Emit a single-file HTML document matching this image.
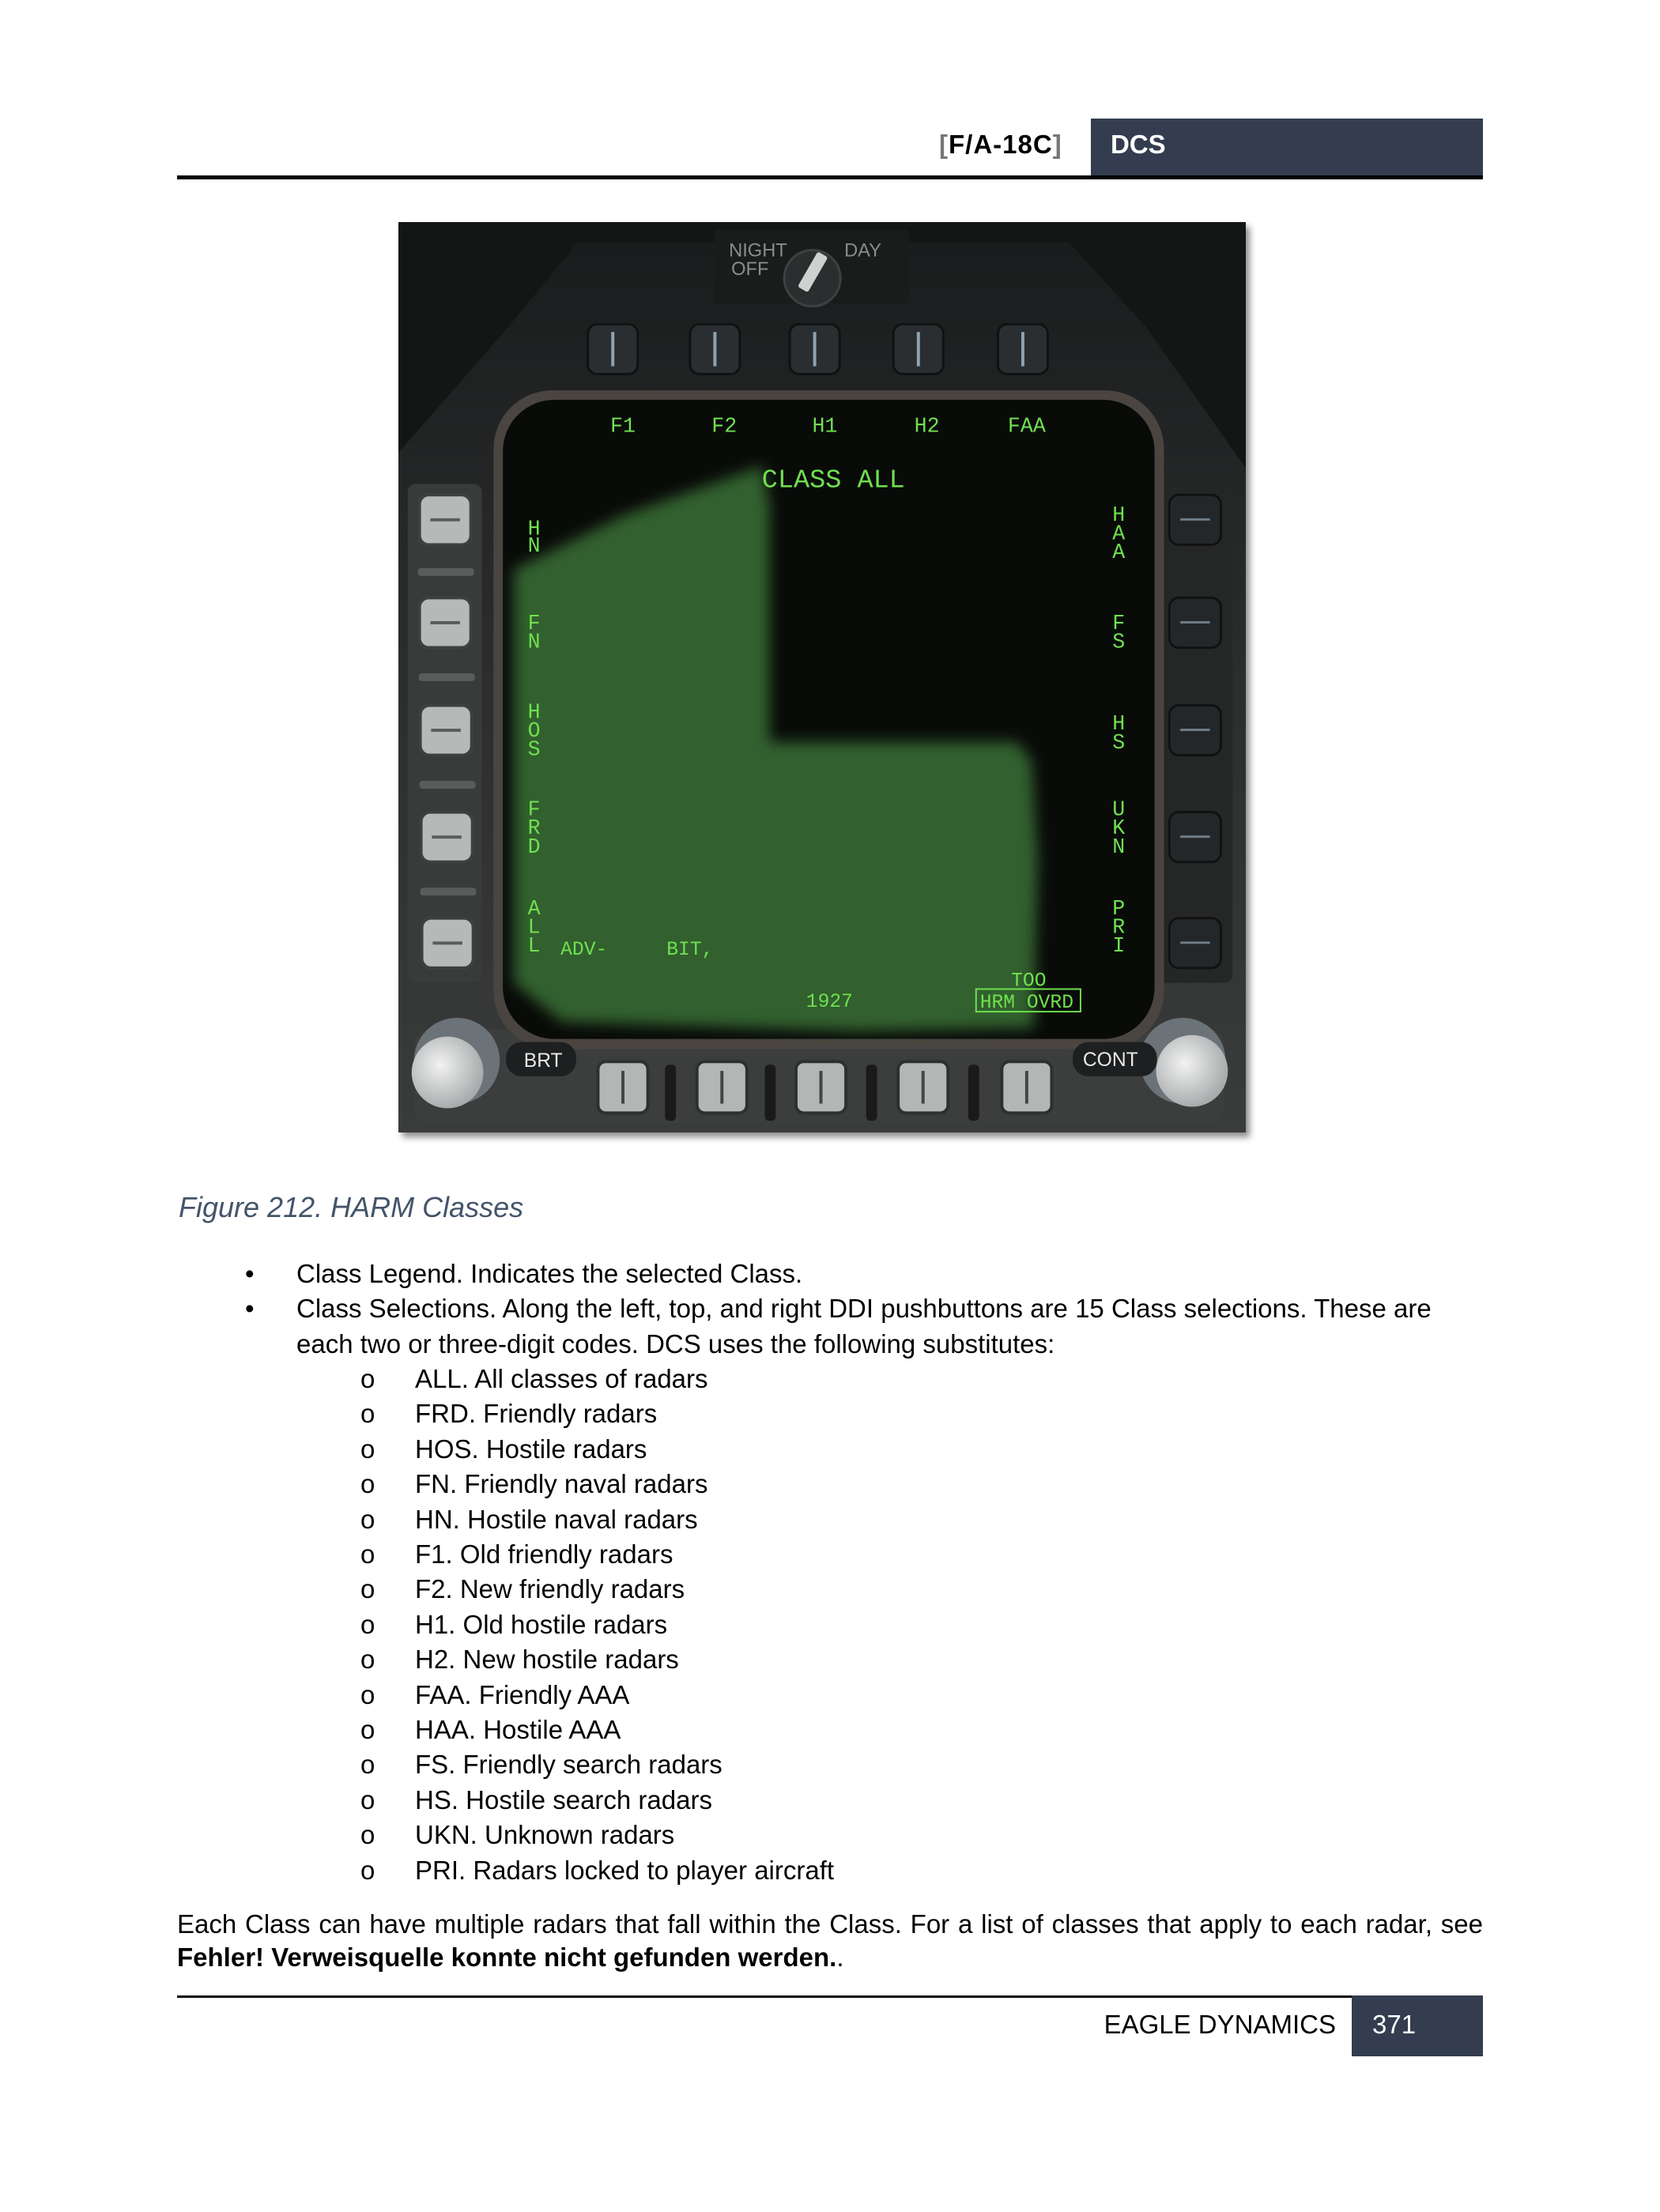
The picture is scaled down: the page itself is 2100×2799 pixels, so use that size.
<!DOCTYPE html>
<html><head><meta charset="utf-8"><style>
body{margin:0;background:#fff;}
#p{position:relative;width:2100px;height:2799px;overflow:hidden;background:#fff;font-family:"Liberation Sans",sans-serif;color:#000;}
.a{position:absolute;white-space:nowrap;}
.t{font-size:33px;line-height:44.4px;}
</style></head><body><div id="p">
<div class="a" style="left:1380px;top:150px;width:496px;height:72px;background:#333d4f;"></div>
<div class="a" style="left:224px;top:222px;width:1652px;height:5px;background:#000;"></div>
<div class="a" style="left:1188px;top:164px;font-size:33px;font-weight:bold;letter-spacing:1px;"><span style="color:#777">[</span>F/A-18C<span style="color:#777">]</span></div>
<div class="a" style="left:1405px;top:164px;font-size:33px;font-weight:bold;color:#fff;">DCS</div>

<div class="a" style="left:504px;top:281px;width:1072px;height:1152px;box-shadow:5px 6px 8px rgba(0,0,0,0.45);">
<svg width="1072" height="1152" viewBox="510 284 1087 1168" preserveAspectRatio="none" style="display:block">
<defs>
<filter id="bl"><feGaussianBlur stdDeviation="9"/></filter>
<linearGradient id="bz" x1="0" y1="0" x2="0" y2="1"><stop offset="0" stop-color="#1a1c1d"/><stop offset="0.5" stop-color="#2c2e2e"/><stop offset="1" stop-color="#3a3c3c"/></linearGradient>
<radialGradient id="kn" cx="0.4" cy="0.4" r="0.6"><stop offset="0" stop-color="#f2f2f2"/><stop offset="1" stop-color="#a9acad"/></radialGradient>
</defs>
<rect x="510" y="284" width="1087" height="1168" fill="#141616"/>
<polygon points="510,580 650,420 740,310 1370,310 1470,420 1597,600 1597,1452 510,1452" fill="url(#bz)"/>
<rect x="522" y="620" width="95" height="640" rx="10" fill="#393b3a"/>
<rect x="1485" y="620" width="95" height="640" rx="10" fill="#252727"/>
<rect x="530" y="1320" width="1040" height="120" rx="20" fill="#3c3e3e"/>
<rect x="632" y="500" width="860" height="845" rx="75" fill="#4a4540"/>
<rect x="644" y="512" width="836" height="820" rx="66" fill="#090b09"/>
<polygon filter="url(#bl)" points="658,730 800,660 977,597 986,650 986,951 1303,951 1322,975 1330,1100 1325,1318 1100,1322 720,1310 658,1260" fill="#33602d"/>
<rect x="915" y="294" width="250" height="95" rx="6" fill="#1a1c1c"/>
<text x="934" y="328" font-family="Liberation Sans" font-size="24" fill="#8a8d8d">NIGHT</text>
<text x="1082" y="328" font-family="Liberation Sans" font-size="24" fill="#8a8d8d">DAY</text>
<text x="937" y="352" font-family="Liberation Sans" font-size="24" fill="#8a8d8d">OFF</text>
<circle cx="1041" cy="356" r="36" fill="#2b2d2e" stroke="#3e4142" stroke-width="3"/>
<rect x="1033" y="322" width="15" height="52" rx="3" fill="#cfd1d1" transform="rotate(30 1041 350)"/>
<g fill="#2a2e31" stroke="#111" stroke-width="3">
<rect x="753" y="415" width="64" height="64" rx="12"/><rect x="884" y="415" width="64" height="64" rx="12"/><rect x="1012" y="415" width="64" height="64" rx="12"/><rect x="1145" y="415" width="64" height="64" rx="12"/><rect x="1279" y="415" width="64" height="64" rx="12"/>
</g>
<g fill="#8ea3b0"><rect x="783" y="425" width="4" height="44"/><rect x="914" y="425" width="4" height="44"/><rect x="1042" y="425" width="4" height="44"/><rect x="1175" y="425" width="4" height="44"/><rect x="1309" y="425" width="4" height="44"/></g>
<g fill="#b6b9b8" stroke="#3d4040" stroke-width="4">
<rect x="537" y="634" width="66" height="64" rx="12"/><rect x="537" y="766" width="66" height="64" rx="12"/><rect x="538" y="904" width="66" height="64" rx="12"/><rect x="539" y="1041" width="66" height="64" rx="12"/><rect x="540" y="1177" width="66" height="64" rx="12"/>
</g>
<g fill="#5a5c5c"><rect x="551" y="664" width="38" height="4"/><rect x="551" y="796" width="38" height="4"/><rect x="552" y="934" width="38" height="4"/><rect x="553" y="1071" width="38" height="4"/><rect x="554" y="1207" width="38" height="4"/>
<rect x="535" y="728" width="72" height="10" rx="4"/><rect x="536" y="863" width="72" height="10" rx="4"/><rect x="537" y="1001" width="72" height="10" rx="4"/><rect x="538" y="1138" width="72" height="10" rx="4"/></g>
<g fill="#24272a" stroke="#111" stroke-width="3">
<rect x="1499" y="634" width="66" height="64" rx="12"/><rect x="1499" y="766" width="66" height="64" rx="12"/><rect x="1499" y="904" width="66" height="64" rx="12"/><rect x="1499" y="1041" width="66" height="64" rx="12"/><rect x="1499" y="1177" width="66" height="64" rx="12"/>
</g>
<g fill="#6f7d86"><rect x="1513" y="664" width="38" height="3"/><rect x="1513" y="796" width="38" height="3"/><rect x="1513" y="934" width="38" height="3"/><rect x="1513" y="1071" width="38" height="3"/><rect x="1513" y="1207" width="38" height="3"/></g>
<g fill="#b3b6b5" stroke="#2e3030" stroke-width="4">
<rect x="766" y="1361" width="64" height="66" rx="10"/><rect x="893" y="1361" width="64" height="66" rx="10"/><rect x="1020" y="1361" width="64" height="66" rx="10"/><rect x="1151" y="1361" width="64" height="66" rx="10"/><rect x="1284" y="1361" width="64" height="66" rx="10"/>
</g>
<g fill="#444"><rect x="796" y="1373" width="4" height="42"/><rect x="923" y="1373" width="4" height="42"/><rect x="1050" y="1373" width="4" height="42"/><rect x="1181" y="1373" width="4" height="42"/><rect x="1314" y="1373" width="4" height="42"/></g>
<g fill="#1a1a1a"><rect x="852" y="1365" width="14" height="72" rx="5"/><rect x="980" y="1365" width="14" height="72" rx="5"/><rect x="1110" y="1365" width="14" height="72" rx="5"/><rect x="1241" y="1365" width="14" height="72" rx="5"/></g>
<circle cx="585" cy="1360" r="55" fill="#6c7378"/><circle cx="573" cy="1375" r="46" fill="url(#kn)"/>
<circle cx="1516" cy="1360" r="55" fill="#6c7378"/><circle cx="1528" cy="1373" r="46" fill="url(#kn)"/>
<rect x="648" y="1336" width="90" height="44" rx="20" fill="#1d1f20"/>
<rect x="1375" y="1336" width="108" height="44" rx="20" fill="#1d1f20"/>
<text x="671" y="1368" font-family="Liberation Sans" font-size="25" fill="#e8e8e8">BRT</text>
<text x="1388" y="1367" font-family="Liberation Sans" font-size="25" fill="#e8e8e8">CONT</text>
<g font-family="Liberation Mono" font-size="27" fill="#6fe050" text-anchor="middle">
<text x="798" y="553">F1</text><text x="928" y="553">F2</text><text x="1057" y="553">H1</text><text x="1188" y="553">H2</text><text x="1316" y="553">FAA</text>
<text x="1068" y="624" font-size="34">CLASS ALL</text>
<text x="684" y="685">H</text><text x="684" y="707">N</text>
<text x="684" y="806">F</text><text x="684" y="830">N</text>
<text x="684" y="920">H</text><text x="684" y="944">O</text><text x="684" y="968">S</text>
<text x="684" y="1045">F</text><text x="684" y="1069">R</text><text x="684" y="1093">D</text>
<text x="684" y="1172">A</text><text x="684" y="1196">L</text><text x="684" y="1220">L</text>
<text x="1434" y="667">H</text><text x="1434" y="691">A</text><text x="1434" y="715">A</text>
<text x="1434" y="806">F</text><text x="1434" y="830">S</text>
<text x="1434" y="935">H</text><text x="1434" y="959">S</text>
<text x="1434" y="1045">U</text><text x="1434" y="1069">K</text><text x="1434" y="1093">N</text>
<text x="1434" y="1172">P</text><text x="1434" y="1196">R</text><text x="1434" y="1220">I</text>
</g>
<g font-family="Liberation Mono" font-size="25" fill="#6fe050">
<text x="718" y="1224">ADV-</text><text x="854" y="1224">BIT,</text>
<text x="1033" y="1291">1927</text>
<text x="1296" y="1264">TOO</text>
<text x="1256" y="1292">HRM OVRD</text>
</g>
<rect x="1251" y="1268" width="134" height="29" fill="none" stroke="#6fe050" stroke-width="2"/>
</svg>
</div>

<div class="a" style="left:226px;top:1507px;font-size:36px;font-style:italic;color:#44546a;">Figure 212. HARM Classes</div>

<div class="a t" style="left:310px;top:1590px;">•</div>
<div class="a t" style="left:375px;top:1590px;">Class Legend. Indicates the selected Class.</div>
<div class="a t" style="left:310px;top:1634px;">•</div>
<div class="a t" style="left:375px;top:1634px;">Class Selections. Along the left, top, and right DDI pushbuttons are 15 Class selections. These are</div>
<div class="a t" style="left:375px;top:1679px;">each two or three-digit codes. DCS uses the following substitutes:</div>

<div class="a t" style="left:456px;top:1723px;">o<br>o<br>o<br>o<br>o<br>o<br>o<br>o<br>o<br>o<br>o<br>o<br>o<br>o<br>o</div>
<div class="a t" style="left:525px;top:1723px;">ALL. All classes of radars<br>FRD. Friendly radars<br>HOS. Hostile radars<br>FN. Friendly naval radars<br>HN. Hostile naval radars<br>F1. Old friendly radars<br>F2. New friendly radars<br>H1. Old hostile radars<br>H2. New hostile radars<br>FAA. Friendly AAA<br>HAA. Hostile AAA<br>FS. Friendly search radars<br>HS. Hostile search radars<br>UKN. Unknown radars<br>PRI. Radars locked to player aircraft</div>

<div class="a t" style="left:224px;top:2413px;width:1652px;text-align:justify;text-align-last:justify;">Each Class can have multiple radars that fall within the Class. For a list of classes that apply to each radar, see</div>
<div class="a t" style="left:224px;top:2455px;"><b>Fehler! Verweisquelle konnte nicht gefunden werden.</b>.</div>

<div class="a" style="left:224px;top:2525px;width:1486px;height:3px;background:#000;"></div>
<div class="a" style="left:1710px;top:2525px;width:166px;height:77px;background:#333d4f;"></div>
<div class="a" style="left:1380px;top:2543px;width:310px;text-align:right;font-size:33px;">EAGLE DYNAMICS</div>
<div class="a" style="left:1736px;top:2543px;font-size:33px;color:#fff;">371</div>
</div></body></html>
